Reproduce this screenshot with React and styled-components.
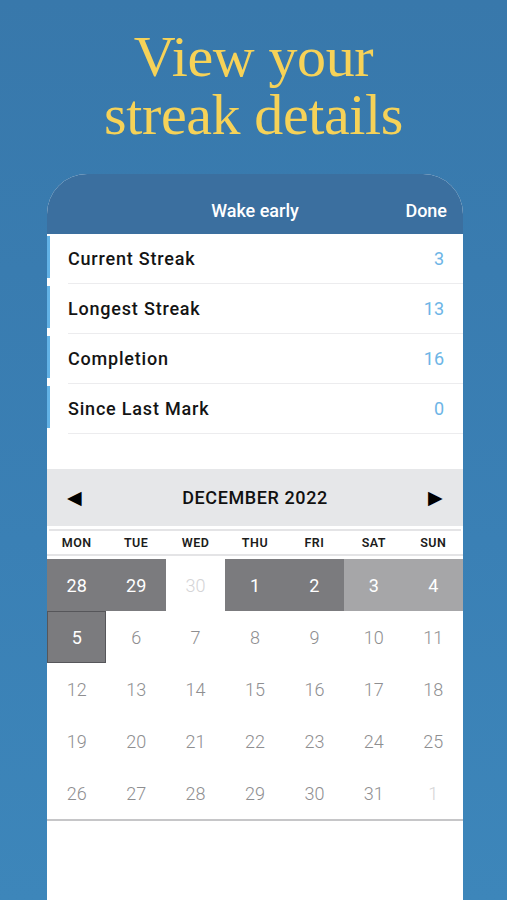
import React from 'react';
import styled, { createGlobalStyle, css } from 'styled-components';

const GlobalStyle = createGlobalStyle`
  html, body {
    margin: 0;
    padding: 0;
    background: #3a7fb4;
  }
  body {
    font-family: Roboto, "Liberation Sans", sans-serif;
  }
`;

const Page = styled.div`
  width: 507px;
  height: 900px;
  overflow: hidden;
  display: flex;
  flex-direction: column;
  align-items: center;
  background: linear-gradient(180deg, #3878ab 0%, #3a80b5 60%, #3d86ba 100%);
`;

const Title = styled.h1`
  margin: 28px 0 0;
  font-family: "Liberation Serif", "DejaVu Serif", serif;
  font-weight: 400;
  font-size: 58px;
  line-height: 58px;
  letter-spacing: -0.4px;
  color: #f6d258;
  text-align: center;
`;

const Phone = styled.div`
  margin-top: 30px;
  margin-left: 3px;
  width: 416px;
  flex: 1;
  display: flex;
  flex-direction: column;
  background: #fff;
  border-radius: 40px 40px 0 0;
  overflow: hidden;
`;

const NavBar = styled.div`
  height: 60px;
  flex-shrink: 0;
  background: #3b6f9f;
  display: grid;
  grid-template-columns: 1fr auto 1fr;
  align-items: end;
  padding: 0 16px 13px;
  box-sizing: border-box;
  color: #fff;
  font-size: 18px;
  font-weight: 500;
`;

const NavTitle = styled.div`
  grid-column: 2;
`;

const NavAction = styled.div`
  justify-self: end;
`;

const StatList = styled.div`
  display: flex;
  flex-direction: column;
  padding-bottom: 35px;
`;

const StatRow = styled.div`
  display: flex;
  height: 50px;
`;

const Accent = styled.div`
  width: 3px;
  height: 42px;
  margin-top: 2px;
  background: #62b2e6;
`;

const StatBody = styled.div`
  flex: 1;
  margin-left: 18px;
  padding-right: 19px;
  display: flex;
  align-items: center;
  justify-content: space-between;
  border-bottom: 1px solid #ececee;
`;

const StatLabel = styled.span`
  font-size: 18px;
  font-weight: 500;
  color: #141414;
  letter-spacing: 0.8px;
`;

const StatValue = styled.span`
  font-size: 18px;
  color: #6db5e6;
`;

const MonthBar = styled.div`
  height: 57px;
  background: #e6e7e9;
  display: flex;
  align-items: center;
  justify-content: space-between;
  padding: 0 17px;
  border-bottom: 3px solid #fff;
  box-shadow: 0 4px 0 -2px #e4e4e6;
`;

const Arrow = styled.span`
  font-size: 19px;
  color: #000;
  width: 20px;
  text-align: center;
`;

const MonthLabel = styled.span`
  font-size: 18px;
  font-weight: 500;
  color: #111;
  letter-spacing: 0.6px;
`;

const WeekHeader = styled.div`
  display: grid;
  grid-template-columns: repeat(7, 1fr);
  height: 24px;
  align-items: center;
  border-bottom: 2px solid #e4e4e6;
  margin-top: 1px;
  margin-bottom: 3px;
`;

const WeekDay = styled.span`
  text-align: center;
  font-size: 12.5px;
  font-weight: 600;
  color: #1c1c1c;
  letter-spacing: 0.5px;
`;

const DayGrid = styled.div`
  display: grid;
  grid-template-columns: repeat(7, 1fr);
  grid-auto-rows: 52px;
  border-bottom: 2px solid #c6c6c8;
`;

const Day = styled.div`
  display: flex;
  align-items: center;
  justify-content: center;
  font-size: 18px;
  font-weight: 300;
  color: #8e8e90;
  box-sizing: border-box;
  ${p => p.outside && css`
    color: #d4d4d6;
  `}
  ${p => p.mark === 'dark' && css`
    background: #7b7b7e;
    color: #fff;
    font-weight: 400;
  `}
  ${p => p.mark === 'light' && css`
    background: #a6a6a8;
    color: #fff;
    font-weight: 400;
  `}
  ${p => p.today && css`
    border: 1px solid #56565a;
  `}
`;

const stats = [
  ['Current Streak', 3],
  ['Longest Streak', 13],
  ['Completion', 16],
  ['Since Last Mark', 0],
];

const weekDays = ['MON', 'TUE', 'WED', 'THU', 'FRI', 'SAT', 'SUN'];

const days = [
  { n: 28, mark: 'dark' },
  { n: 29, mark: 'dark' },
  { n: 30, outside: true },
  { n: 1, mark: 'dark' },
  { n: 2, mark: 'dark' },
  { n: 3, mark: 'light' },
  { n: 4, mark: 'light' },
  { n: 5, mark: 'dark', today: true },
  ...Array.from({ length: 26 }, (_, i) => ({ n: i + 6 })),
  { n: 1, outside: true },
];

export default function App() {
  return (
    <Page>
      <GlobalStyle />
      <Title>View your<br />streak details</Title>
      <Phone>
        <NavBar>
          <NavTitle>Wake early</NavTitle>
          <NavAction>Done</NavAction>
        </NavBar>
        <StatList>
          {stats.map(([label, value]) => (
            <StatRow key={label}>
              <Accent />
              <StatBody>
                <StatLabel>{label}</StatLabel>
                <StatValue>{value}</StatValue>
              </StatBody>
            </StatRow>
          ))}
        </StatList>
        <MonthBar>
          <Arrow>◀</Arrow>
          <MonthLabel>DECEMBER 2022</MonthLabel>
          <Arrow>▶</Arrow>
        </MonthBar>
        <WeekHeader>
          {weekDays.map(d => <WeekDay key={d}>{d}</WeekDay>)}
        </WeekHeader>
        <DayGrid>
          {days.map((d, i) => (
            <Day key={i} mark={d.mark} outside={d.outside} today={d.today}>
              {d.n}
            </Day>
          ))}
        </DayGrid>
      </Phone>
    </Page>
  );
}
